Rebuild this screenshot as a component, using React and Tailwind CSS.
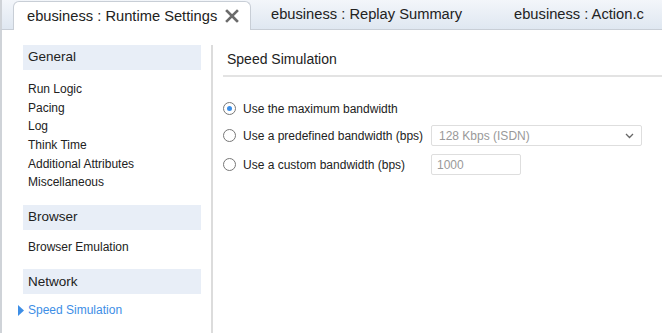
import React, { useState } from 'react';

const font = { fontFamily: '"Liberation Sans", Arial, sans-serif' };

const SectionHeader = ({ title }) => (
  <div className="ml-[21px] w-[178px] h-[25px] bg-[#e8eef7] flex items-center pl-[5px] text-[13.5px] text-[#222]">
    {title}
  </div>
);

const Item = ({ label, active }) => (
  <div className={`relative pl-[26px] h-[18.6px] flex items-center text-[12px] ${active ? 'text-[#3d8ee6]' : 'text-[#222]'}`}>
    {active && (
      <svg className="absolute left-[16px] top-[4px]" width="6" height="11" viewBox="0 0 6 11">
        <path d="M0 0 L6 5.5 L0 11 Z" fill="#3d8ee6" />
      </svg>
    )}
    {label}
  </div>
);

const Radio = ({ checked }) => (
  <span className="w-[13px] h-[13px] rounded-full border border-[#777] bg-white flex items-center justify-center shrink-0">
    {checked && <span className="w-[5px] h-[5px] rounded-full bg-[#3d8ee6]" />}
  </span>
);

export default function App() {
  const [mode, setMode] = useState(0);

  return (
    <div className="w-[662px] h-[333px] bg-white overflow-hidden flex flex-col" style={font}>
      {/* tab bar */}
      <div className="h-[30px] flex items-end bg-gradient-to-b from-[#f3f6fa] to-[#dfe7f1] border-b border-[#c8ced6] border-l-2 border-l-[#cfd3d8] shrink-0">
        <div className="ml-[11px] h-[29px] w-[238px] bg-white border border-[#c8ced6] border-b-0 rounded-t-[6px] flex items-center pl-[13px] text-[14.7px] text-[#222] -mb-px">
          ebusiness : Runtime Settings
          <svg className="ml-[8px]" width="14" height="14" viewBox="0 0 14 14">
            <path d="M2 2 L12 12 M12 2 L2 12" stroke="#6b6b6b" strokeWidth="2.6" strokeLinecap="square" />
          </svg>
        </div>
        <div className="h-[29px] flex items-center pl-[20px] text-[14.7px] text-[#222]">ebusiness : Replay Summary</div>
        <div className="h-[29px] flex items-center pl-[52px] text-[14.7px] text-[#222]">ebusiness : Action.c</div>
      </div>

      <div className="flex flex-1 border-l-2 border-l-[#cfd3d8]">
        {/* sidebar */}
        <div className="w-[209px] pt-[15px] flex flex-col shrink-0">
          <SectionHeader title="General" />
          <div className="pt-[10px] flex flex-col">
            <Item label="Run Logic" />
            <Item label="Pacing" />
            <Item label="Log" />
            <Item label="Think Time" />
            <Item label="Additional Attributes" />
            <Item label="Miscellaneous" />
          </div>
          <div className="mt-[13px]">
            <SectionHeader title="Browser" />
          </div>
          <div className="pt-[8px]">
            <Item label="Browser Emulation" />
          </div>
          <div className="mt-[13px]">
            <SectionHeader title="Network" />
          </div>
          <div className="pt-[7px]">
            <Item label="Speed Simulation" active />
          </div>
        </div>
        <div className="mt-[15px] w-[2px] bg-[#dcdcdc] shrink-0" />

        {/* content */}
        <div className="flex-1 pl-[10px] pt-[16px]">
          <div className="ml-[4px] h-[26px] flex items-center text-[14px] text-[#222]">Speed Simulation</div>
          <div className="mt-[3px] h-[2px] bg-[#e3e3e3]" />
          <div className="pt-[22px] flex flex-col text-[12px] text-[#222] whitespace-nowrap">
            <label className="h-[19px] flex items-center gap-[7px]" onClick={() => setMode(0)}>
              <Radio checked={mode === 0} />
              Use the maximum bandwidth
            </label>
            <label className="mt-[7px] h-[21px] flex items-center" onClick={() => setMode(1)}>
              <span className="flex items-center gap-[7px] w-[208px] shrink-0">
                <Radio checked={mode === 1} />
                Use a predefined bandwidth (bps)
              </span>
              <div className="w-[211px] h-[21px] border border-[#dedede] rounded-[2px] flex items-center justify-between px-[7px] text-[#999]">
                128 Kbps (ISDN)
                <svg width="9" height="6" viewBox="0 0 9 6">
                  <path d="M1 1 L4.5 4.5 L8 1" stroke="#666" strokeWidth="1.3" fill="none" />
                </svg>
              </div>
            </label>
            <label className="mt-[8px] h-[21px] flex items-center" onClick={() => setMode(2)}>
              <span className="flex items-center gap-[7px] w-[208px] shrink-0">
                <Radio checked={mode === 2} />
                Use a custom bandwidth (bps)
              </span>
              <div className="w-[90px] h-[21px] border border-[#dedede] rounded-[2px] flex items-center px-[5px] text-[#999]">
                1000
              </div>
            </label>
          </div>
        </div>
      </div>
    </div>
  );
}
